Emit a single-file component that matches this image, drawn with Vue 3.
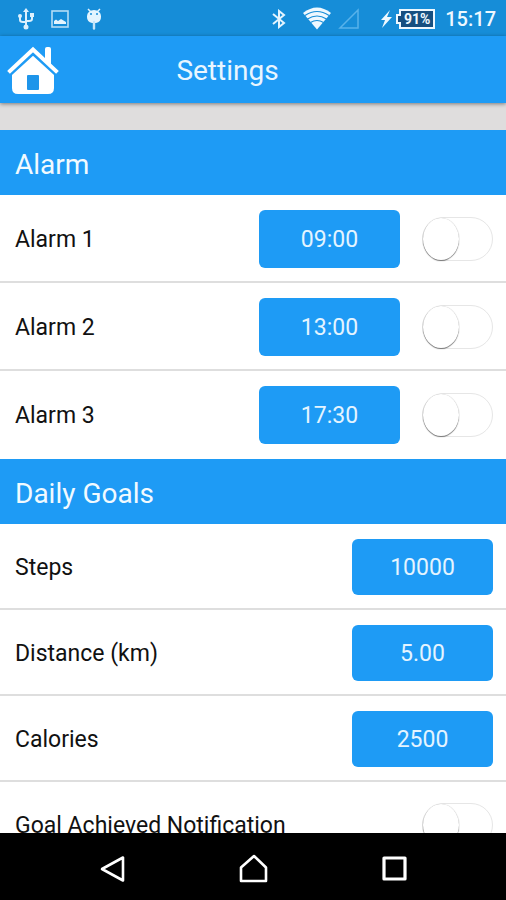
<script setup>
import { reactive } from 'vue'

const alarms = reactive([
  { id: 'alarm-1', label: 'Alarm 1', time: '09:00', on: false },
  { id: 'alarm-2', label: 'Alarm 2', time: '13:00', on: false },
  { id: 'alarm-3', label: 'Alarm 3', time: '17:30', on: false }
])

const goals = reactive([
  { id: 'steps', label: 'Steps', value: '10000' },
  { id: 'distance', label: 'Distance (km)', value: '5.00' },
  { id: 'calories', label: 'Calories', value: '2500' }
])

const notification = reactive({ on: false })
</script>

<template>
  <div class="screen">
    <div class="status">
      <div class="status-left">
        <svg width="18" height="22" viewBox="0 0 18 22" fill="none" stroke="#dcf0fd" stroke-width="2">
          <path d="M9 3v15M3 8v4q0 2 3 2h3M15 7v4q0 2-3 2H9" />
          <path d="M9 0l3 4H6z" fill="#dcf0fd" stroke="none" />
          <circle cx="9" cy="19" r="2.5" fill="#dcf0fd" stroke="none" />
          <circle cx="3" cy="8" r="2" fill="#dcf0fd" stroke="none" />
          <path d="M13 5h4v4h-4z" fill="#dcf0fd" stroke="none" />
        </svg>
        <svg width="18" height="18" viewBox="0 0 18 18">
          <rect x="1" y="1" width="16" height="16" fill="none" stroke="#b5dcf6" stroke-width="1.6" />
          <path d="M3 14v-3l2-1.500 2 1.500 3-2 5 3v2z" fill="#e4f4fe" />
        </svg>
        <svg width="18" height="22" viewBox="0 0 18 22">
          <path d="M3 1l3 3M15 1l-3 3" stroke="#e4f4fe" stroke-width="1.500" />
          <path d="M2 8a7 6 0 0 1 14 0v1q0 5-5 6H7q-5-1-5-6z" fill="#e4f4fe" />
          <path d="M9 14v6.500" stroke="#c4e4f9" stroke-width="2.400" stroke-linecap="round" />
          <circle cx="6" cy="6" r="1" fill="#168dd8" />
          <circle cx="12" cy="6" r="1" fill="#168dd8" />
        </svg>
      </div>
      <div class="status-right">
        <svg width="14" height="20" viewBox="0 0 14 20" fill="none" stroke="#e4f4fe" stroke-width="2">
          <path d="M1 5l11 9-5 4V2l5 4-11 9" />
        </svg>
        <svg class="wifi" width="28" height="23" viewBox="0 0 28 23">
          <path d="M14 22.500L0 6Q14-5 28 6z" fill="#eef8ff" />
          <path d="M2 8.500q12-8 24 0M4.500 12q9.500-6 19 0M7.500 15.500q6.500-4 13 0" fill="none" stroke="#168dd8" stroke-width="1.200" />
        </svg>
        <svg class="signal" width="22" height="22" viewBox="0 0 22 22">
          <path d="M20 2v18H2z" fill="none" stroke="#58b2ea" stroke-width="1.500" />
        </svg>
        <svg class="bolt" width="13" height="18" viewBox="0 0 13 18">
          <path d="M10 0L1 10h4l-3 8L12 7H7z" fill="#eef8ff" />
        </svg>
        <span class="battery">91%</span>
        <span class="clock">15:17</span>
      </div>
    </div>

    <header class="appbar">
      <button class="home" type="button" aria-label="Home">
        <svg width="52" height="50" viewBox="0 0 52 50">
          <path d="M38 18V4q0-2 2-2h2q2 0 2 2v20z" fill="#fff" />
          <path d="M5 27V25L26 7l21 18v18q0 6-6 6H11q-6 0-6-6z" fill="#fff" />
          <path d="M3 28.500L26 7.500l23 21" fill="none" stroke="#1e9bf5" stroke-width="5" />
          <path d="M3 26L26 4.500l23 21.500" fill="none" stroke="#fff" stroke-width="4" stroke-linecap="square" />
          <rect x="20" y="30" width="12" height="15" rx="1" fill="#1e95ea" />
        </svg>
      </button>
      <h1>Settings</h1>
    </header>

    <main>
      <section>
        <h2>Alarm</h2>
        <div v-for="alarm in alarms" :key="alarm.id" class="row tall">
          <label :for="alarm.id">{{ alarm.label }}</label>
          <button class="value" type="button">{{ alarm.time }}</button>
          <input :id="alarm.id" v-model="alarm.on" class="switch" type="checkbox" role="switch" />
        </div>
      </section>
      <section>
        <h2>Daily Goals</h2>
        <div v-for="goal in goals" :key="goal.id" class="row">
          <label :for="goal.id">{{ goal.label }}</label>
          <button :id="goal.id" class="value" type="button">{{ goal.value }}</button>
        </div>
        <div class="row">
          <label for="notification">Goal Achieved Notification</label>
          <input id="notification" v-model="notification.on" class="switch" type="checkbox" role="switch" />
        </div>
      </section>
    </main>

    <nav class="navbar">
      <button type="button" aria-label="Back">
        <svg width="28" height="30" viewBox="0 0 28 30" fill="none" stroke="#fff" stroke-width="2.600" stroke-linejoin="round">
          <path d="M25 3.500v23L4 15z" />
        </svg>
      </button>
      <button type="button" aria-label="Home screen">
        <svg width="30" height="30" viewBox="0 0 30 30" fill="none" stroke="#fff" stroke-width="2.600" stroke-linejoin="round">
          <path d="M3 27V13.500L16 2l12 11.500V27z" />
        </svg>
      </button>
      <button type="button" aria-label="Recent apps">
        <svg width="28" height="30" viewBox="0 0 28 30" fill="none" stroke="#fff" stroke-width="3.200" stroke-linejoin="round">
          <rect x="4" y="4" width="21" height="21" />
        </svg>
      </button>
    </nav>
  </div>
</template>

<style>
body {
  margin: 0;
}
</style>

<style scoped>
.screen {
  display: flex;
  flex-direction: column;
  height: 100vh;
  overflow: hidden;
  background: #fff;
  font-family: Roboto, "Liberation Sans", sans-serif;
  color: #111;
}

svg {
  display: block;
}

button {
  border: 0;
  padding: 0;
  background: none;
  font-family: inherit;
  cursor: pointer;
}

.status {
  display: flex;
  flex: none;
  align-items: center;
  justify-content: space-between;
  box-sizing: border-box;
  height: 36px;
  padding: 1px 10px 0 17px;
  background: #168dd8;
  color: #eef8ff;
}

.status-left {
  display: flex;
  align-items: center;
  gap: 16px;
}

.status-right {
  display: flex;
  align-items: center;
}

.wifi {
  margin-left: 17px;
}

.signal {
  margin-left: 7px;
}

.bolt {
  margin-left: 20px;
}

.battery {
  position: relative;
  box-sizing: border-box;
  width: 36px;
  height: 20px;
  margin-left: 6px;
  border: 2px solid #eef8ff;
  background: #164f80;
  font-size: 14px;
  line-height: 16px;
  font-weight: 700;
  text-align: center;
}

.battery::before {
  content: "";
  position: absolute;
  top: 3px;
  left: -5px;
  box-sizing: border-box;
  width: 5px;
  height: 10px;
  border: 2px solid #eef8ff;
  border-right: 0;
  background: #164f80;
}

.clock {
  margin-left: 10px;
  font-size: 20px;
  line-height: 24px;
  font-weight: 500;
}

.appbar {
  position: relative;
  display: flex;
  flex: none;
  align-items: center;
  height: 67px;
  padding: 0 58px 0 7px;
  background: #1e9bf5;
  box-shadow: 0 1px 4px rgba(0, 0, 0, 0.45);
}

.home {
  flex: none;
}

h1 {
  flex: 1;
  margin: 0 52px 0 0;
  padding-top: 3px;
  color: #e9f6ff;
  font-size: 28px;
  line-height: 36px;
  font-weight: 400;
  text-align: center;
}

main {
  flex: 1;
  min-height: 0;
  overflow: hidden;
  padding-top: 27px;
  background: #dfdddd;
}

h2 {
  margin: 0;
  padding: 17px 15px 12px;
  background: #1e9bf5;
  color: #f1faff;
  font-size: 28px;
  line-height: 36px;
  font-weight: 400;
}

.row {
  display: flex;
  align-items: center;
  gap: 22px;
  box-sizing: border-box;
  height: 86px;
  padding: 1px 13px 0 15px;
  border-bottom: 2px solid #dedede;
  background: #fff;
  font-size: 23px;
  line-height: 28px;
}

.row.tall {
  height: 88px;
}

.row.tall:last-child {
  border-bottom-color: #fff;
}

.row label {
  flex: 1;
  padding-top: 3px;
}

.value {
  width: 141px;
  height: 56px;
  padding-top: 3px;
  border-radius: 6px;
  background: #1e9bf5;
  color: #e4f4ff;
  font-size: 23px;
  line-height: 28px;
}

.tall .value {
  height: 58px;
}

.switch {
  appearance: none;
  box-sizing: border-box;
  width: 71px;
  height: 44px;
  margin: 0;
  border: 1px solid #e6e6e6;
  border-radius: 22px;
  background: #fff;
  cursor: pointer;
}

.switch::before {
  content: "";
  display: block;
  box-sizing: border-box;
  width: 36px;
  height: 42px;
  border-radius: 50%;
  background: #fff;
  box-shadow: 0 1px 1px rgba(0, 0, 0, 0.5), 0 0 1px rgba(0, 0, 0, 0.25);
}

.switch:checked {
  background: #1e9bf5;
}

.switch:checked::before {
  margin-left: auto;
}

.navbar {
  display: flex;
  flex: none;
  align-items: center;
  justify-content: center;
  gap: 112px;
  height: 67px;
  padding-top: 4px;
  box-sizing: border-box;
  background: #000;
}
</style>
